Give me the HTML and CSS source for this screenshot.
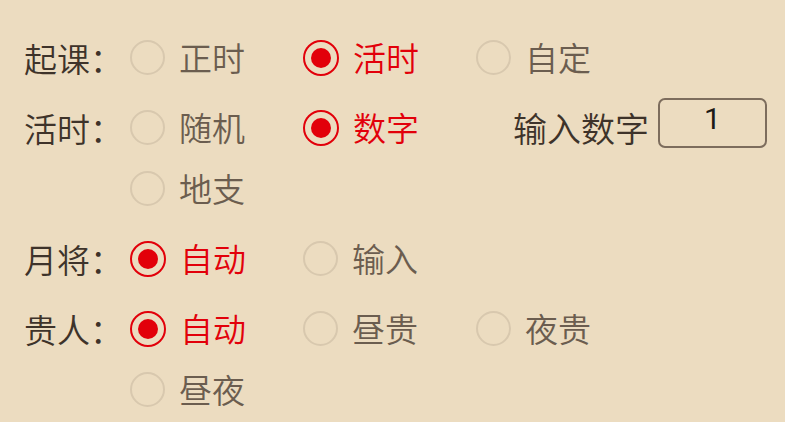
FILE: index.html
```html
<!DOCTYPE html>
<html lang="zh-CN">
<head>
<meta charset="utf-8">
<link rel="stylesheet" href="styles.css">
</head>
<body>
<div class="panel">
  <div class="group">
    <div class="label">起课：</div>
    <div class="options">
      <div class="opt"><span class="radio"></span><span class="txt">正时</span></div>
      <div class="opt on"><span class="radio"></span><span class="txt">活时</span></div>
      <div class="opt"><span class="radio"></span><span class="txt">自定</span></div>
    </div>
  </div>
  <div class="group">
    <div class="label">活时：</div>
    <div class="options">
      <div class="opt"><span class="radio"></span><span class="txt">随机</span></div>
      <div class="opt on"><span class="radio"></span><span class="txt">数字</span></div>
      <div class="num"><span class="num-label">输入数字</span><span class="num-box">1</span></div>
      <div class="opt"><span class="radio"></span><span class="txt">地支</span></div>
    </div>
  </div>
  <div class="group">
    <div class="label">月将：</div>
    <div class="options">
      <div class="opt on"><span class="radio"></span><span class="txt">自动</span></div>
      <div class="opt"><span class="radio"></span><span class="txt">输入</span></div>
    </div>
  </div>
  <div class="group">
    <div class="label">贵人：</div>
    <div class="options">
      <div class="opt on"><span class="radio"></span><span class="txt">自动</span></div>
      <div class="opt"><span class="radio"></span><span class="txt">昼贵</span></div>
      <div class="opt"><span class="radio"></span><span class="txt">夜贵</span></div>
      <div class="opt"><span class="radio"></span><span class="txt">昼夜</span></div>
    </div>
  </div>
</div>
</body>
</html>
```

FILE: styles.css
```css
html, body {
  margin: 0;
  padding: 0;
  background: #ecdcc0;
}
body {
  width: 785px;
  height: 422px;
  overflow: hidden;
  font-family: "Noto Sans CJK SC", "Noto Sans", sans-serif;
  font-weight: 350;
}
.panel {
  display: flex;
  flex-direction: column;
  gap: 9px;
  padding: 27px 18px 0 24px;
}
.group {
  display: flex;
  align-items: flex-start;
}
.label {
  width: 106px;
  height: 61px;
  display: flex;
  align-items: center;
  font-size: 33px;
  color: #3e332a;
  flex: none;
}
.options {
  flex: 1;
  display: grid;
  grid-template-columns: 173px 173px 1fr;
  grid-auto-rows: 61px;
  align-items: center;
}
.opt {
  display: flex;
  align-items: center;
  gap: 14px;
}
.radio {
  box-sizing: border-box;
  width: 35px;
  height: 35px;
  border-radius: 50%;
  border: 2px solid #d8c8ae;
  display: flex;
  align-items: center;
  justify-content: center;
  flex: none;
}
.txt {
  font-size: 33px;
  color: #6b5d4f;
  line-height: 1;
}
.opt.on .radio {
  width: 36px;
  height: 36px;
  border: 2.5px solid #e2000a;
}
.opt.on .radio::after {
  content: "";
  width: 20px;
  height: 20px;
  border-radius: 50%;
  background: #e2000a;
}
.opt.on .txt {
  color: #e2000a;
}
.num {
  justify-self: end;
  display: flex;
  align-items: center;
  gap: 9px;
}
.num-label {
  font-size: 34px;
  color: #3e332a;
  line-height: 1;
}
.num-box {
  box-sizing: border-box;
  width: 109px;
  height: 50px;
  margin-bottom: 9px;
  border: 2px solid #7d6d5d;
  border-radius: 7px;
  display: flex;
  justify-content: center;
  padding-top: 4px;
  font-family: Roboto, "Noto Sans", sans-serif;
  font-weight: 400;
  font-size: 30px;
  line-height: 1;
  color: #1e1a16;
}
```
